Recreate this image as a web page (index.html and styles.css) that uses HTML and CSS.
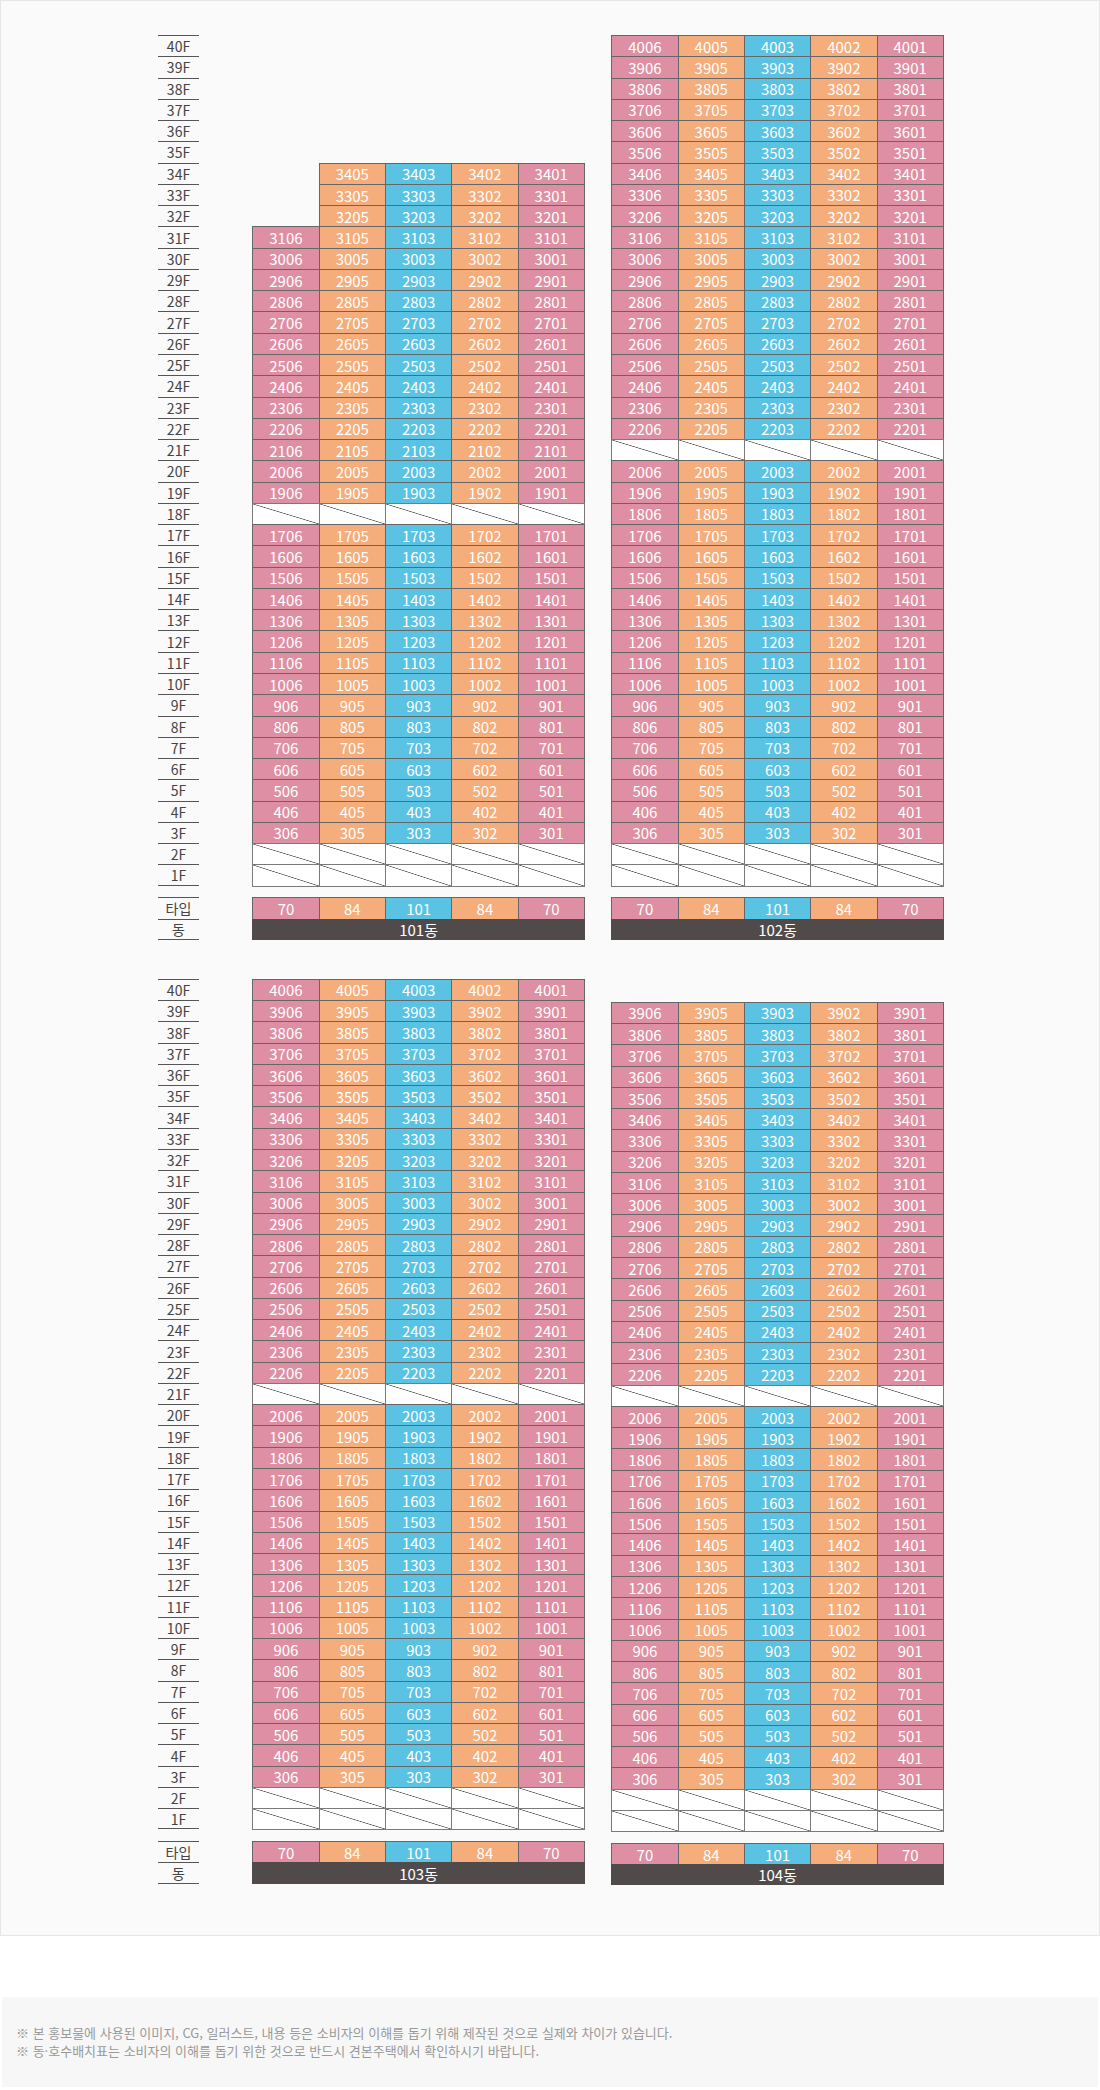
FILE: index.html
```html
<!DOCTYPE html>
<html lang="ko">
<head>
<meta charset="utf-8">
<title>동·호수 배치표</title>
<link rel="stylesheet" href="styles.css">
</head>
<body>
<div class="chart">
  <section class="group">
    <div class="labels">
      <div class="floors">
        <div class="f">40F</div><div class="f">39F</div><div class="f">38F</div><div class="f">37F</div><div class="f">36F</div><div class="f">35F</div><div class="f">34F</div><div class="f">33F</div><div class="f">32F</div><div class="f">31F</div>
        <div class="f">30F</div><div class="f">29F</div><div class="f">28F</div><div class="f">27F</div><div class="f">26F</div><div class="f">25F</div><div class="f">24F</div><div class="f">23F</div><div class="f">22F</div><div class="f">21F</div>
        <div class="f">20F</div><div class="f">19F</div><div class="f">18F</div><div class="f">17F</div><div class="f">16F</div><div class="f">15F</div><div class="f">14F</div><div class="f">13F</div><div class="f">12F</div><div class="f">11F</div>
        <div class="f">10F</div><div class="f">9F</div><div class="f">8F</div><div class="f">7F</div><div class="f">6F</div><div class="f">5F</div><div class="f">4F</div><div class="f">3F</div><div class="f">2F</div><div class="f">1F</div>
      </div>
      <div class="meta"><div class="f">타입</div><div class="f">동</div></div>
    </div>

    <div class="bld">
      <div class="units from34">
        <span class="e"></span><span>3405</span><span>3403</span><span>3402</span><span>3401</span>
        <span class="e"></span><span>3305</span><span>3303</span><span>3302</span><span>3301</span>
        <span class="e"></span><span>3205</span><span>3203</span><span>3202</span><span>3201</span>
        <span>3106</span><span>3105</span><span>3103</span><span>3102</span><span>3101</span>
        <span>3006</span><span>3005</span><span>3003</span><span>3002</span><span>3001</span>
        <span>2906</span><span>2905</span><span>2903</span><span>2902</span><span>2901</span>
        <span>2806</span><span>2805</span><span>2803</span><span>2802</span><span>2801</span>
        <span>2706</span><span>2705</span><span>2703</span><span>2702</span><span>2701</span>
        <span>2606</span><span>2605</span><span>2603</span><span>2602</span><span>2601</span>
        <span>2506</span><span>2505</span><span>2503</span><span>2502</span><span>2501</span>
        <span>2406</span><span>2405</span><span>2403</span><span>2402</span><span>2401</span>
        <span>2306</span><span>2305</span><span>2303</span><span>2302</span><span>2301</span>
        <span>2206</span><span>2205</span><span>2203</span><span>2202</span><span>2201</span>
        <span>2106</span><span>2105</span><span>2103</span><span>2102</span><span>2101</span>
        <span>2006</span><span>2005</span><span>2003</span><span>2002</span><span>2001</span>
        <span>1906</span><span>1905</span><span>1903</span><span>1902</span><span>1901</span>
        <span class="x"></span><span class="x"></span><span class="x"></span><span class="x"></span><span class="x"></span>
        <span>1706</span><span>1705</span><span>1703</span><span>1702</span><span>1701</span>
        <span>1606</span><span>1605</span><span>1603</span><span>1602</span><span>1601</span>
        <span>1506</span><span>1505</span><span>1503</span><span>1502</span><span>1501</span>
        <span>1406</span><span>1405</span><span>1403</span><span>1402</span><span>1401</span>
        <span>1306</span><span>1305</span><span>1303</span><span>1302</span><span>1301</span>
        <span>1206</span><span>1205</span><span>1203</span><span>1202</span><span>1201</span>
        <span>1106</span><span>1105</span><span>1103</span><span>1102</span><span>1101</span>
        <span>1006</span><span>1005</span><span>1003</span><span>1002</span><span>1001</span>
        <span>906</span><span>905</span><span>903</span><span>902</span><span>901</span>
        <span>806</span><span>805</span><span>803</span><span>802</span><span>801</span>
        <span>706</span><span>705</span><span>703</span><span>702</span><span>701</span>
        <span>606</span><span>605</span><span>603</span><span>602</span><span>601</span>
        <span>506</span><span>505</span><span>503</span><span>502</span><span>501</span>
        <span>406</span><span>405</span><span>403</span><span>402</span><span>401</span>
        <span>306</span><span>305</span><span>303</span><span>302</span><span>301</span>
        <span class="x"></span><span class="x"></span><span class="x"></span><span class="x"></span><span class="x"></span>
        <span class="x"></span><span class="x"></span><span class="x"></span><span class="x"></span><span class="x"></span>
      </div>
      <div class="types"><span>70</span><span>84</span><span>101</span><span>84</span><span>70</span></div>
      <div class="dong">101동</div>
    </div>

    <div class="bld">
      <div class="units">
        <span>4006</span><span>4005</span><span>4003</span><span>4002</span><span>4001</span>
        <span>3906</span><span>3905</span><span>3903</span><span>3902</span><span>3901</span>
        <span>3806</span><span>3805</span><span>3803</span><span>3802</span><span>3801</span>
        <span>3706</span><span>3705</span><span>3703</span><span>3702</span><span>3701</span>
        <span>3606</span><span>3605</span><span>3603</span><span>3602</span><span>3601</span>
        <span>3506</span><span>3505</span><span>3503</span><span>3502</span><span>3501</span>
        <span>3406</span><span>3405</span><span>3403</span><span>3402</span><span>3401</span>
        <span>3306</span><span>3305</span><span>3303</span><span>3302</span><span>3301</span>
        <span>3206</span><span>3205</span><span>3203</span><span>3202</span><span>3201</span>
        <span>3106</span><span>3105</span><span>3103</span><span>3102</span><span>3101</span>
        <span>3006</span><span>3005</span><span>3003</span><span>3002</span><span>3001</span>
        <span>2906</span><span>2905</span><span>2903</span><span>2902</span><span>2901</span>
        <span>2806</span><span>2805</span><span>2803</span><span>2802</span><span>2801</span>
        <span>2706</span><span>2705</span><span>2703</span><span>2702</span><span>2701</span>
        <span>2606</span><span>2605</span><span>2603</span><span>2602</span><span>2601</span>
        <span>2506</span><span>2505</span><span>2503</span><span>2502</span><span>2501</span>
        <span>2406</span><span>2405</span><span>2403</span><span>2402</span><span>2401</span>
        <span>2306</span><span>2305</span><span>2303</span><span>2302</span><span>2301</span>
        <span>2206</span><span>2205</span><span>2203</span><span>2202</span><span>2201</span>
        <span class="x"></span><span class="x"></span><span class="x"></span><span class="x"></span><span class="x"></span>
        <span>2006</span><span>2005</span><span>2003</span><span>2002</span><span>2001</span>
        <span>1906</span><span>1905</span><span>1903</span><span>1902</span><span>1901</span>
        <span>1806</span><span>1805</span><span>1803</span><span>1802</span><span>1801</span>
        <span>1706</span><span>1705</span><span>1703</span><span>1702</span><span>1701</span>
        <span>1606</span><span>1605</span><span>1603</span><span>1602</span><span>1601</span>
        <span>1506</span><span>1505</span><span>1503</span><span>1502</span><span>1501</span>
        <span>1406</span><span>1405</span><span>1403</span><span>1402</span><span>1401</span>
        <span>1306</span><span>1305</span><span>1303</span><span>1302</span><span>1301</span>
        <span>1206</span><span>1205</span><span>1203</span><span>1202</span><span>1201</span>
        <span>1106</span><span>1105</span><span>1103</span><span>1102</span><span>1101</span>
        <span>1006</span><span>1005</span><span>1003</span><span>1002</span><span>1001</span>
        <span>906</span><span>905</span><span>903</span><span>902</span><span>901</span>
        <span>806</span><span>805</span><span>803</span><span>802</span><span>801</span>
        <span>706</span><span>705</span><span>703</span><span>702</span><span>701</span>
        <span>606</span><span>605</span><span>603</span><span>602</span><span>601</span>
        <span>506</span><span>505</span><span>503</span><span>502</span><span>501</span>
        <span>406</span><span>405</span><span>403</span><span>402</span><span>401</span>
        <span>306</span><span>305</span><span>303</span><span>302</span><span>301</span>
        <span class="x"></span><span class="x"></span><span class="x"></span><span class="x"></span><span class="x"></span>
        <span class="x"></span><span class="x"></span><span class="x"></span><span class="x"></span><span class="x"></span>
      </div>
      <div class="types"><span>70</span><span>84</span><span>101</span><span>84</span><span>70</span></div>
      <div class="dong">102동</div>
    </div>
  </section>

  <section class="group">
    <div class="labels">
      <div class="floors">
        <div class="f">40F</div><div class="f">39F</div><div class="f">38F</div><div class="f">37F</div><div class="f">36F</div><div class="f">35F</div><div class="f">34F</div><div class="f">33F</div><div class="f">32F</div><div class="f">31F</div>
        <div class="f">30F</div><div class="f">29F</div><div class="f">28F</div><div class="f">27F</div><div class="f">26F</div><div class="f">25F</div><div class="f">24F</div><div class="f">23F</div><div class="f">22F</div><div class="f">21F</div>
        <div class="f">20F</div><div class="f">19F</div><div class="f">18F</div><div class="f">17F</div><div class="f">16F</div><div class="f">15F</div><div class="f">14F</div><div class="f">13F</div><div class="f">12F</div><div class="f">11F</div>
        <div class="f">10F</div><div class="f">9F</div><div class="f">8F</div><div class="f">7F</div><div class="f">6F</div><div class="f">5F</div><div class="f">4F</div><div class="f">3F</div><div class="f">2F</div><div class="f">1F</div>
      </div>
      <div class="meta"><div class="f">타입</div><div class="f">동</div></div>
    </div>

    <div class="bld">
      <div class="units">
        <span>4006</span><span>4005</span><span>4003</span><span>4002</span><span>4001</span>
        <span>3906</span><span>3905</span><span>3903</span><span>3902</span><span>3901</span>
        <span>3806</span><span>3805</span><span>3803</span><span>3802</span><span>3801</span>
        <span>3706</span><span>3705</span><span>3703</span><span>3702</span><span>3701</span>
        <span>3606</span><span>3605</span><span>3603</span><span>3602</span><span>3601</span>
        <span>3506</span><span>3505</span><span>3503</span><span>3502</span><span>3501</span>
        <span>3406</span><span>3405</span><span>3403</span><span>3402</span><span>3401</span>
        <span>3306</span><span>3305</span><span>3303</span><span>3302</span><span>3301</span>
        <span>3206</span><span>3205</span><span>3203</span><span>3202</span><span>3201</span>
        <span>3106</span><span>3105</span><span>3103</span><span>3102</span><span>3101</span>
        <span>3006</span><span>3005</span><span>3003</span><span>3002</span><span>3001</span>
        <span>2906</span><span>2905</span><span>2903</span><span>2902</span><span>2901</span>
        <span>2806</span><span>2805</span><span>2803</span><span>2802</span><span>2801</span>
        <span>2706</span><span>2705</span><span>2703</span><span>2702</span><span>2701</span>
        <span>2606</span><span>2605</span><span>2603</span><span>2602</span><span>2601</span>
        <span>2506</span><span>2505</span><span>2503</span><span>2502</span><span>2501</span>
        <span>2406</span><span>2405</span><span>2403</span><span>2402</span><span>2401</span>
        <span>2306</span><span>2305</span><span>2303</span><span>2302</span><span>2301</span>
        <span>2206</span><span>2205</span><span>2203</span><span>2202</span><span>2201</span>
        <span class="x"></span><span class="x"></span><span class="x"></span><span class="x"></span><span class="x"></span>
        <span>2006</span><span>2005</span><span>2003</span><span>2002</span><span>2001</span>
        <span>1906</span><span>1905</span><span>1903</span><span>1902</span><span>1901</span>
        <span>1806</span><span>1805</span><span>1803</span><span>1802</span><span>1801</span>
        <span>1706</span><span>1705</span><span>1703</span><span>1702</span><span>1701</span>
        <span>1606</span><span>1605</span><span>1603</span><span>1602</span><span>1601</span>
        <span>1506</span><span>1505</span><span>1503</span><span>1502</span><span>1501</span>
        <span>1406</span><span>1405</span><span>1403</span><span>1402</span><span>1401</span>
        <span>1306</span><span>1305</span><span>1303</span><span>1302</span><span>1301</span>
        <span>1206</span><span>1205</span><span>1203</span><span>1202</span><span>1201</span>
        <span>1106</span><span>1105</span><span>1103</span><span>1102</span><span>1101</span>
        <span>1006</span><span>1005</span><span>1003</span><span>1002</span><span>1001</span>
        <span>906</span><span>905</span><span>903</span><span>902</span><span>901</span>
        <span>806</span><span>805</span><span>803</span><span>802</span><span>801</span>
        <span>706</span><span>705</span><span>703</span><span>702</span><span>701</span>
        <span>606</span><span>605</span><span>603</span><span>602</span><span>601</span>
        <span>506</span><span>505</span><span>503</span><span>502</span><span>501</span>
        <span>406</span><span>405</span><span>403</span><span>402</span><span>401</span>
        <span>306</span><span>305</span><span>303</span><span>302</span><span>301</span>
        <span class="x"></span><span class="x"></span><span class="x"></span><span class="x"></span><span class="x"></span>
        <span class="x"></span><span class="x"></span><span class="x"></span><span class="x"></span><span class="x"></span>
      </div>
      <div class="types"><span>70</span><span>84</span><span>101</span><span>84</span><span>70</span></div>
      <div class="dong">103동</div>
    </div>

    <div class="bld">
      <div class="units from39">
        <span>3906</span><span>3905</span><span>3903</span><span>3902</span><span>3901</span>
        <span>3806</span><span>3805</span><span>3803</span><span>3802</span><span>3801</span>
        <span>3706</span><span>3705</span><span>3703</span><span>3702</span><span>3701</span>
        <span>3606</span><span>3605</span><span>3603</span><span>3602</span><span>3601</span>
        <span>3506</span><span>3505</span><span>3503</span><span>3502</span><span>3501</span>
        <span>3406</span><span>3405</span><span>3403</span><span>3402</span><span>3401</span>
        <span>3306</span><span>3305</span><span>3303</span><span>3302</span><span>3301</span>
        <span>3206</span><span>3205</span><span>3203</span><span>3202</span><span>3201</span>
        <span>3106</span><span>3105</span><span>3103</span><span>3102</span><span>3101</span>
        <span>3006</span><span>3005</span><span>3003</span><span>3002</span><span>3001</span>
        <span>2906</span><span>2905</span><span>2903</span><span>2902</span><span>2901</span>
        <span>2806</span><span>2805</span><span>2803</span><span>2802</span><span>2801</span>
        <span>2706</span><span>2705</span><span>2703</span><span>2702</span><span>2701</span>
        <span>2606</span><span>2605</span><span>2603</span><span>2602</span><span>2601</span>
        <span>2506</span><span>2505</span><span>2503</span><span>2502</span><span>2501</span>
        <span>2406</span><span>2405</span><span>2403</span><span>2402</span><span>2401</span>
        <span>2306</span><span>2305</span><span>2303</span><span>2302</span><span>2301</span>
        <span>2206</span><span>2205</span><span>2203</span><span>2202</span><span>2201</span>
        <span class="x"></span><span class="x"></span><span class="x"></span><span class="x"></span><span class="x"></span>
        <span>2006</span><span>2005</span><span>2003</span><span>2002</span><span>2001</span>
        <span>1906</span><span>1905</span><span>1903</span><span>1902</span><span>1901</span>
        <span>1806</span><span>1805</span><span>1803</span><span>1802</span><span>1801</span>
        <span>1706</span><span>1705</span><span>1703</span><span>1702</span><span>1701</span>
        <span>1606</span><span>1605</span><span>1603</span><span>1602</span><span>1601</span>
        <span>1506</span><span>1505</span><span>1503</span><span>1502</span><span>1501</span>
        <span>1406</span><span>1405</span><span>1403</span><span>1402</span><span>1401</span>
        <span>1306</span><span>1305</span><span>1303</span><span>1302</span><span>1301</span>
        <span>1206</span><span>1205</span><span>1203</span><span>1202</span><span>1201</span>
        <span>1106</span><span>1105</span><span>1103</span><span>1102</span><span>1101</span>
        <span>1006</span><span>1005</span><span>1003</span><span>1002</span><span>1001</span>
        <span>906</span><span>905</span><span>903</span><span>902</span><span>901</span>
        <span>806</span><span>805</span><span>803</span><span>802</span><span>801</span>
        <span>706</span><span>705</span><span>703</span><span>702</span><span>701</span>
        <span>606</span><span>605</span><span>603</span><span>602</span><span>601</span>
        <span>506</span><span>505</span><span>503</span><span>502</span><span>501</span>
        <span>406</span><span>405</span><span>403</span><span>402</span><span>401</span>
        <span>306</span><span>305</span><span>303</span><span>302</span><span>301</span>
        <span class="x"></span><span class="x"></span><span class="x"></span><span class="x"></span><span class="x"></span>
        <span class="x"></span><span class="x"></span><span class="x"></span><span class="x"></span><span class="x"></span>
      </div>
      <div class="types"><span>70</span><span>84</span><span>101</span><span>84</span><span>70</span></div>
      <div class="dong">104동</div>
    </div>
  </section>
</div>

<div class="notice">
  <p>※ 본 홍보물에 사용된 이미지, CG, 일러스트, 내용 등은 소비자의 이해를 돕기 위해 제작된 것으로 실제와 차이가 있습니다.</p>
  <p>※ 동·호수배치표는 소비자의 이해를 돕기 위한 것으로 반드시 견본주택에서 확인하시기 바랍니다.</p>
</div>
</body>
</html>
```

FILE: styles.css
```css
:root {
  --row: 21.27px;
  --col: 66.33px;
  --line: #666;
  --pink: #de8fa3;
  --orange: #f4ad7b;
  --blue: #5ac2e2;
  --dark: #504b4a;
}

* {
  box-sizing: border-box;
  margin: 0;
  padding: 0;
}

body {
  margin: 0;
  background: #fff;
  font-family: "Noto Sans CJK KR", "Noto Sans", sans-serif;
}

.chart {
  height: 1936px;
  border: 1px solid #e6e6e6;
  background: #fafafa;
  padding: 34px 0 0 157px;
}

.group {
  display: flex;
  align-items: flex-start;
}

.group + .group {
  margin-top: 39px;
}

.labels {
  width: 41px;
  margin-right: 53.3px;
}

.f {
  height: var(--row);
  border-top: 1px solid #555;
  display: flex;
  align-items: center;
  justify-content: center;
  font-size: 14px;
  line-height: 1;
  color: #444;
}

.floors .f:last-child,
.meta .f:last-child {
  border-bottom: 1px solid #555;
}

.meta {
  margin-top: 11.7px;
}

.bld {
  width: calc(var(--col) * 5);
}

.bld + .bld {
  margin-left: 27.3px;
}

.units,
.types {
  display: grid;
  grid-template-columns: repeat(5, var(--col));
  grid-auto-rows: var(--row);
}

.units.from34 {
  margin-top: calc(var(--row) * 6);
}

.units.from39 {
  margin-top: calc(var(--row) + 1.7px);
}

.units > span,
.types > span {
  border: 1px solid var(--line);
  margin: 0 -1px -1px 0;
  display: flex;
  align-items: center;
  justify-content: center;
  color: #fff;
  font-size: 15px;
  line-height: 1;
}

.units > :nth-child(5n+1),
.types > :nth-child(5n+1),
.units > :nth-child(5n+5),
.types > :nth-child(5n+5) {
  background: var(--pink);
}

.units > :nth-child(5n+2),
.types > :nth-child(5n+2),
.units > :nth-child(5n+4),
.types > :nth-child(5n+4) {
  background: var(--orange);
}

.units > :nth-child(5n+3),
.types > :nth-child(5n+3) {
  background: var(--blue);
}

.units > .e {
  border: 0;
  background: none;
}

.units > .x {
  border-color: #7a7a7a;
  background: #fff linear-gradient(to top right, transparent calc(50% - 0.7px), #555 50%, transparent calc(50% + 0.7px));
}

.types {
  margin-top: 11.7px;
}

.dong {
  position: relative;
  height: var(--row);
  width: calc(100% + 1px);
  background: var(--dark);
  color: #fff;
  font-size: 15px;
  line-height: 1;
  display: flex;
  align-items: center;
  justify-content: center;
}

.notice {
  margin: 61px 2px 0;
  background: #f7f7f7;
  padding: 27px 14px;
  font-size: 13px;
  line-height: 18px;
  color: #999;
}
```
